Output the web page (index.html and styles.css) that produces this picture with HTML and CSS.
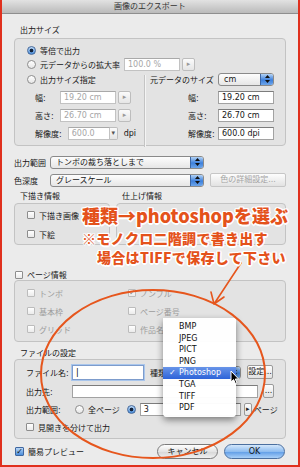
FILE: index.html
```html
<!DOCTYPE html>
<html lang="ja">
<head>
    <meta charset="UTF-8">
    <title>画像のエクスポート</title>
    <link rel="stylesheet" href="styles.css">
</head>
<body>
<div class="win">
    <div class="titlebar">画像のエクスポート</div>

    <div class="content">
        <!-- 出力サイズ -->
        <div class="sec-label">出力サイズ</div>
        <div class="group size-group">
            <div class="row pad12"><span class="radio on"></span>等倍で出力</div>
            <div class="row pad12"><span class="radio"></span>元データからの拡大率<span class="inp dis w56 ml4">100.0 %</span><span class="abtn ml2">&#9656;</span></div>
            <div class="size-cols">
                <div class="col-left">
                    <div class="row"><span class="radio"></span>出力サイズ指定</div>
                    <div class="row field mt4"><span class="lbl">幅:</span><span class="inp dis w56">19.20 cm</span><span class="abtn ml2">&#9656;</span></div>
                    <div class="row field mt4"><span class="lbl">高さ:</span><span class="inp dis w56">26.70 cm</span><span class="abtn ml2">&#9656;</span></div>
                    <div class="row field mt4"><span class="lbl">解像度:</span><span class="inp dis w42 combo">600.0</span><span class="cbtn">&#9662;</span><span class="ml6">dpi</span></div>
                </div>
                <div class="vdiv"></div>
                <div class="col-right">
                    <div class="row"><span class="rlbl-wide">元データのサイズ</span>
                        <span class="pop w56"><span class="pop-text">cm</span><span class="stp"><svg width="5" height="8" viewBox="0 0 5 8"><path d="M2.5 0 L5 3 L0 3 Z M2.5 8 L5 5 L0 5 Z" fill="#111"/></svg></span></span>
                    </div>
                    <div class="row field-r mt4"><span class="rlbl">幅:</span><span class="inp w56">19.20 cm</span></div>
                    <div class="row field-r mt4"><span class="rlbl">高さ:</span><span class="inp w56">26.70 cm</span></div>
                    <div class="row field-r mt4"><span class="rlbl">解像度:</span><span class="inp w56">600.0 dpi</span></div>
                </div>
            </div>
        </div>

        <div class="row range-row"><span class="flbl">出力範囲</span>
            <span class="pop w154"><span class="pop-text">トンボの裁ち落としまで</span><span class="stp"><svg width="5" height="8" viewBox="0 0 5 8"><path d="M2.5 0 L5 3 L0 3 Z M2.5 8 L5 5 L0 5 Z" fill="#111"/></svg></span></span>
        </div>
        <div class="row mt4"><span class="flbl">色深度</span>
            <span class="pop w154"><span class="pop-text">グレースケール</span><span class="stp"><svg width="5" height="8" viewBox="0 0 5 8"><path d="M2.5 0 L5 3 L0 3 Z M2.5 8 L5 5 L0 5 Z" fill="#111"/></svg></span></span>
            <span class="btn dis-btn ml6">色の詳細設定...</span>
        </div>

        <!-- 下描き情報 / 仕上げ情報 -->
        <div class="pair-labels"><span class="pl-left">下描き情報</span><span>仕上げ情報</span></div>
        <div class="pair">
            <div class="group draft-group">
                <div class="crow"><span class="cb"></span>下描き画像</div>
                <div class="crow mt7"><span class="cb"></span>下絵</div>
            </div>
            <div class="group finish-group"></div>
        </div>

        <!-- ページ情報 -->
        <div class="crow page-head"><span class="cb"></span>ページ情報</div>
        <div class="group page-group">
            <div class="crow off"><span class="cb"></span>トンボ</div>
            <div class="crow off"><span class="cb ck">&#10003;</span>ノンブル</div>
            <div class="crow off"><span class="cb"></span>基本枠</div>
            <div class="crow off"><span class="cb"></span>ページ番号</div>
            <div class="crow off"><span class="cb"></span>グリッド</div>
            <div class="crow off"><span class="cb"></span>作品名</div>
        </div>

        <!-- ファイルの設定 -->
        <div class="sec-label file-label">ファイルの設定</div>
        <div class="group file-group">
            <div class="row"><span class="flabel">ファイル名:</span><span class="inp focus w72">|</span>
                <span class="ml6 kind">種類</span>
                <span class="pop w78"><span class="pop-text"></span><span class="stp"><svg width="5" height="8" viewBox="0 0 5 8"><path d="M2.5 0 L5 3 L0 3 Z M2.5 8 L5 5 L0 5 Z" fill="#111"/></svg></span></span>
                <span class="btn ml6 w26">設定...</span>
            </div>
            <div class="row mt5"><span class="flabel">出力先:</span><span class="inp w186"></span><span class="btn ml5 w11">...</span></div>
            <div class="row mt4"><span class="flabel">出力範囲:</span><span class="radio ml3"></span>全ページ<span class="radio on ml7"></span><span class="inp w101">3</span><span class="abtn small ml3">&#9656;</span><span class="ml2">ページ</span></div>
            <div class="crow mt5"><span class="cb"></span>見開きを分けて出力</div>
        </div>

        <div class="row bottom-row">
            <span class="cb blue">&#10003;</span>簡易プレビュー
            <span class="pill cancel">キャンセル</span>
            <span class="pill ok">OK</span>
        </div>
    </div>

    <!-- 上に重なるもの -->
    <div class="overlay">
        <div class="menu">
            <div class="mi">BMP</div>
            <div class="mi">JPEG</div>
            <div class="mi">PICT</div>
            <div class="mi">PNG</div>
            <div class="mi sel"><span class="tick">&#10003;</span>Photoshop</div>
            <div class="mi">TGA</div>
            <div class="mi">TIFF</div>
            <div class="mi">PDF</div>
        </div>
        <svg class="marks" width="300" height="467" viewBox="0 0 300 467">
            <ellipse cx="153" cy="374" rx="112" ry="84" fill="none" stroke="#e6561d" stroke-width="2"/>
            <path d="M241 263 L214 304 M214 304 L211 292 M214 304 L224 297" fill="none" stroke="#e6561d" stroke-width="1.6" stroke-linecap="round"/>
        </svg>
        <svg class="cursor" width="10" height="15" viewBox="0 0 10 15">
            <path d="M1 1 L1 12 L3.6 9.6 L5.4 13.6 L7 12.9 L5.3 9 L8.6 9 Z" fill="#000" stroke="#fff" stroke-width="1"/>
        </svg>
        <div class="note note1">種類→photoshopを選ぶ</div>
        <div class="note note2">※モノクロ二階調で書き出す</div>
        <div class="note note3">場合はTIFFで保存して下さい</div>
    </div>
</div>
</body>
</html>
```

FILE: styles.css
```css
body {
    margin: 0;
    font-family: "DejaVu Sans", "Noto Sans CJK JP", sans-serif;
    font-size: 8px;
    color: #161616;
    background: #fff;
}
.win {
    position: relative;
    width: 300px;
    height: 467px;
    box-sizing: border-box;
    border: 2px solid #e0301e;
    border-top: 0;
    background: #ebebeb;
    overflow: hidden;
}
.titlebar {
    height: 13px;
    line-height: 13px;
    text-align: center;
    border-bottom: 1px solid #8e8e8e;
    background: linear-gradient(#e2e2e2, #bababa);
    color: #333;
}
.content {
    padding: 0 12px;
}
.sec-label {
    height: 10px;
    line-height: 10px;
    margin-top: 12px;
    padding-left: 6px;
}
.group {
    border: 1px solid #c3c3c3;
    border-radius: 4px;
    background: #e3e3e3;
    box-sizing: border-box;
}
.row {
    display: flex;
    align-items: center;
    height: 14px;
    white-space: nowrap;
}
.crow {
    display: flex;
    align-items: center;
    height: 12px;
    white-space: nowrap;
}
.pad12 { padding-left: 12px; }
.mt4 { margin-top: 4px; }
.mt5 { margin-top: 5px; }
.mt7 { margin-top: 7px; }
.ml2 { margin-left: 2px; }
.ml3 { margin-left: 3px; }
.ml4 { margin-left: 4px; }
.ml5 { margin-left: 5px; }
.ml6 { margin-left: 6px; }
.ml7 { margin-left: 7px; }
.w11 { width: 11px; }
.w26 { width: 26px; }
.w42 { width: 42px; }
.w56 { width: 56px; }
.w72 { width: 72px; }
.w78 { width: 78px; }
.w101 { width: 101px; }
.w154 { width: 154px; }
.w186 { width: 186px; }

/* controls */
.radio {
    flex: none;
    width: 9px;
    height: 9px;
    box-sizing: border-box;
    border: 1px solid #8d8d8d;
    border-radius: 50%;
    background: linear-gradient(#fff, #e6e6e6);
    margin-right: 4px;
}
.radio.on {
    border-color: #46699a;
    background: radial-gradient(circle, #14233a 0 1.5px, transparent 2.2px), linear-gradient(#bcd8f6, #4a8edb);
}
.cb {
    flex: none;
    width: 8px;
    height: 8px;
    box-sizing: border-box;
    border: 1px solid #8d8d8d;
    border-radius: 1px;
    background: linear-gradient(#fff, #ebebeb);
    margin-right: 4px;
    font-size: 8px;
    line-height: 6px;
    text-align: center;
    overflow: visible;
}
.cb.ck {
    color: #8a8a8a;
    border-color: #bcbcbc;
}
.cb.blue {
    border-color: #3f67a0;
    background: linear-gradient(#b9d6f6, #4a8ddb);
    color: #111;
    width: 9px;
    height: 9px;
    font-weight: bold;
    line-height: 7px;
}
.inp {
    flex: none;
    display: block;
    height: 13px;
    box-sizing: border-box;
    border: 1px solid #a2a2a2;
    border-top-color: #7c7c7c;
    background: #fff;
    padding: 0 3px;
    line-height: 11px;
    overflow: hidden;
}
.inp.dis {
    color: #a6a6a6;
    border-color: #c2c2c2;
    border-top-color: #a9a9a9;
}
.inp.focus {
    height: 15px;
    border-color: #7d9ccc;
    box-shadow: 0 0 0 1px #a9c6ec;
    line-height: 13px;
    color: #000;
}
.abtn, .cbtn {
    flex: none;
    width: 13px;
    height: 13px;
    box-sizing: border-box;
    border: 1px solid #bdbdbd;
    border-radius: 2px;
    background: linear-gradient(#fbfbfb, #e5e5e5);
    color: #9a9a9a;
    font-size: 7px;
    line-height: 11px;
    text-align: center;
}
.abtn.small {
    width: 8px;
    color: #222;
    border-color: #999;
}
.cbtn {
    width: 8px;
    border-radius: 0 2px 2px 0;
    border-left: 0;
    color: #555;
}
.pop {
    flex: none;
    display: flex;
    height: 13px;
    box-sizing: border-box;
    border: 1px solid #8a8a8a;
    border-radius: 3px;
    background: linear-gradient(#fdfdfd, #e6e6e6);
    overflow: hidden;
}
.pop-text {
    flex: 1;
    padding-left: 5px;
    line-height: 11px;
}
.stp {
    flex: none;
    width: 12px;
    display: flex;
    align-items: center;
    justify-content: center;
    background: linear-gradient(#b3d3f6, #3d80dc 55%, #6ea6ea);
    border-left: 1px solid #3d67a4;
}
.btn {
    flex: none;
    height: 14px;
    box-sizing: border-box;
    border: 1px solid #9a9a9a;
    border-radius: 2px;
    background: linear-gradient(#fdfdfd, #e2e2e2);
    text-align: center;
    line-height: 12px;
    font-size: 8px;
}
.dis-btn {
    width: 76px;
    color: #a4a4a4;
    border-color: #c6c6c6;
}

/* 出力サイズ */
.size-group {
    margin-top: 2px;
    height: 108px;
    padding-top: 4px;
}
.size-cols {
    display: flex;
    margin-top: 1px;
}
.col-left {
    width: 117px;
    padding-left: 12px;
}
.field {
    padding-left: 8px;
}
.lbl {
    min-width: 19px;
    margin-right: 6px;
}
.vdiv {
    width: 1px;
    margin-top: 3px;
    margin-bottom: -7px;
    background: #c4c4c4;
    box-shadow: 1px 0 0 #f4f4f4;
}
.col-right {
    padding-left: 5px;
}
.rlbl-wide {
    min-width: 68px;
}
.field-r {
    padding-left: 38px;
}
.rlbl {
    min-width: 30px;
}

/* 出力範囲・色深度 */
.range-row {
    margin-top: 9px;
}
.flbl {
    min-width: 36px;
}

/* 下描き・仕上げ */
.pair-labels {
    display: flex;
    height: 10px;
    line-height: 10px;
    margin-top: 5px;
    padding-left: 6px;
}
.pl-left {
    width: 102px;
}
.pair {
    display: flex;
    gap: 6px;
    margin-top: 1px;
    height: 42px;
}
.draft-group {
    width: 96px;
    padding: 5px 0 0 12px;
}
.finish-group {
    flex: 1;
}

/* ページ情報 */
.page-head {
    margin-top: 24px;
    padding-left: 1px;
    height: 11px;
}
.page-group {
    height: 62px;
    display: grid;
    grid-template-columns: 101px 1fr;
    row-gap: 6px;
    padding: 6px 0 0 12px;
    align-content: start;
}
.off {
    color: #9c9c9c;
}
.off .cb {
    border-color: #bcbcbc;
}

/* ファイルの設定 */
.file-label {
    margin-top: 7px;
}
.file-group {
    height: 80px;
    padding: 5px 0 0 11px;
}
.flabel {
    min-width: 46px;
}
.kind {
    width: 13px;
}
.bottom-row {
    margin-top: 5px;
    height: 15px;
    padding-left: 1px;
}
.pill {
    width: 61px;
    height: 15px;
    box-sizing: border-box;
    border: 1px solid #7b7b7b;
    border-radius: 8px;
    text-align: center;
    line-height: 13px;
    background: linear-gradient(#fefefe, #e4e4e4 50%, #d6d6d6 51%, #f0f0f0);
}
.cancel {
    margin-left: auto;
}
.ok {
    margin-left: 6px;
    margin-right: 1px;
    border-color: #4b6f9f;
    background: linear-gradient(#d4e7fb, #8fbdf0 50%, #5d9be6 51%, #a9d0f8);
}

/* 重なり */
.overlay {
    position: absolute;
    left: -2px;
    top: 0;
    width: 300px;
    height: 467px;
    pointer-events: none;
}
.menu {
    position: absolute;
    left: 163px;
    top: 318px;
    width: 73px;
    height: 99px;
    box-sizing: border-box;
    padding-top: 3px;
    background: rgba(255, 255, 255, 0.97);
    border-radius: 0 0 4px 4px;
    box-shadow: 0 3px 7px rgba(0, 0, 0, 0.45);
}
.mi {
    position: relative;
    height: 11.6px;
    line-height: 11.6px;
    padding-left: 16px;
    color: #111;
}
.mi.sel {
    color: #fff;
    background: linear-gradient(#6894e8, #2d63d8);
}
.tick {
    position: absolute;
    left: 6px;
}
.marks {
    position: absolute;
    left: 0;
    top: 0;
}
.cursor {
    position: absolute;
    left: 230px;
    top: 370px;
}
.note {
    position: absolute;
    color: #e4521b;
    font-family: "Noto Sans CJK JP", sans-serif;
    font-weight: 900;
    white-space: nowrap;
    line-height: 1;
    text-shadow: 0 0 2px #fff, 1.5px 0 0 #fff, -1.5px 0 0 #fff, 0 1.5px 0 #fff, 0 -1.5px 0 #fff,
        1px 1px 0 #fff, -1px -1px 0 #fff, 1px -1px 0 #fff, -1px 1px 0 #fff;
}
.note1 {
    left: 82px;
    top: 206px;
    font-size: 18px;
}
.note2 {
    left: 82px;
    top: 231px;
    font-size: 14px;
    letter-spacing: 0.3px;
}
.note3 {
    left: 97px;
    top: 250px;
    font-size: 14px;
    letter-spacing: 0.3px;
}
```
